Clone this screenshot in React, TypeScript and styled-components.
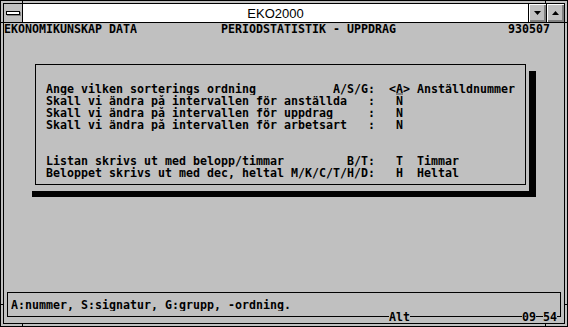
import React from "react";
import styled, { createGlobalStyle } from "styled-components";

const GRAY = "#c0c0c0";
const DARK = "#808080";

// text screen: 80 x 25 cells of 7 x 12 px
const CW = 7;
const CH = 12;

const GlobalStyle = createGlobalStyle`
  html, body {
    margin: 0;
    padding: 0;
    background: ${GRAY};
  }
  body {
    width: 568px;
    height: 327px;
    overflow: hidden;
  }
`;

const Frame = styled.div`
  position: relative;
  box-sizing: border-box;
  width: 568px;
  height: 327px;
  border: 1px solid #000;
  background: ${GRAY};
  padding: 2px;
`;

// the little cuts in a sizing frame
const Notch = styled.div<{ $x?: number; $y?: number; $side: "top" | "bottom" | "left" | "right" }>`
  position: absolute;
  background: #000;
  ${(p) =>
    p.$side === "top" || p.$side === "bottom"
      ? `width: 1px; height: 2px; left: ${p.$x}px; ${p.$side}: 0;`
      : `width: 2px; height: 1px; top: ${p.$y}px; ${p.$side}: 0;`}
`;

const Window = styled.div`
  box-sizing: border-box;
  height: 100%;
  border: 1px solid #000;
  display: flex;
  flex-direction: column;
`;

const TitleBar = styled.div`
  display: flex;
  height: 18px;
  border-bottom: 1px solid #000;
  flex: none;
`;

const SysMenu = styled.div`
  width: 18px;
  border-right: 1px solid #000;
  background: ${GRAY};
  display: flex;
  align-items: center;
  justify-content: center;
`;

const SysBar = styled.div`
  width: 12px;
  height: 2px;
  border: 1px solid #000;
  background: #fff;
  box-shadow: 1px 1px 0 ${DARK};
`;

const Caption = styled.div`
  flex: 1;
  background: #fff;
  display: flex;
  align-items: center;
  justify-content: center;
  font-family: "Liberation Sans", Arial, sans-serif;
  font-size: 13px;
  color: #000;
`;

const CapButton = styled.div`
  width: 18px;
  border-left: 1px solid #000;
  background: ${GRAY};
  box-sizing: border-box;
  box-shadow: inset 1px 1px 0 #fff, inset -2px -2px 0 ${DARK};
  display: flex;
  align-items: center;
  justify-content: center;
  padding: 0 1px 1px 0;
`;

const Screen = styled.div`
  display: grid;
  grid-template-columns: repeat(80, ${CW}px);
  grid-template-rows: repeat(25, ${CH}px);
  height: 300px;
  overflow: hidden;
  background: ${GRAY};
  color: #000;
  font-family: "DejaVu Sans Mono", "Liberation Mono", monospace;
  font-weight: bold;
  font-size: 11.6px;
  line-height: ${CH}px;
`;

type Span = { $row: number; $col: number; $rows?: number; $cols?: number };

const place = (p: Span) => `
  grid-row: ${p.$row + 1} / span ${p.$rows ?? 1};
  grid-column: ${p.$col + 1} / span ${p.$cols ?? 1};
`;

// single-line box drawn through the middle of its edge cells
const Box = styled.div<Span>`
  ${place}
  display: flex;
  flex-direction: column;
`;

const BoxLine = styled.div`
  flex: 1;
  margin: 5px 3px 6px 3px;
  border: 1px solid #000;
`;

const Shadow = styled.div<Span & { $half?: boolean }>`
  ${place}
  background: #000;
  align-self: start;
  height: ${(p) => (p.$half ? CH / 2 : (p.$rows ?? 1) * CH)}px;
`;

const Cursor = styled.div<Span>`
  ${place}
  align-self: end;
  height: 2px;
  background: ${DARK};
`;

const Text = styled.div<Span & { $bg?: boolean }>`
  ${place}
  display: flex;
  white-space: pre;
  overflow: hidden;
  background: ${(p) => (p.$bg ? GRAY : "transparent")};
`;

const Cell = styled.span`
  display: inline-block;
  width: ${CW}px;
  text-align: center;
`;

const Put = ({ row, col, text, bg }: { row: number; col: number; text: string; bg?: boolean }) => (
  <Text $row={row} $col={col} $cols={text.length} $bg={bg}>
    {Array.from(text).map((ch, i) => (
      <Cell key={i}>{ch === " " ? "\u00a0" : ch}</Cell>
    ))}
  </Text>
);

const Arrow = ({ up }: { up?: boolean }) => (
  <svg width="7" height="4" viewBox="0 0 7 4">
    <polygon points={up ? "0,4 7,4 3.5,0" : "0,0 7,0 3.5,4"} fill="#000" />
  </svg>
);

const texts: { row: number; col: number; text: string; bg?: boolean }[] = [
  { row: 0, col: 0, text: "EKONOMIKUNSKAP DATA" },
  { row: 0, col: 31, text: "PERIODSTATISTIK - UPPDRAG" },
  { row: 0, col: 72, text: "930507" },

  { row: 5, col: 6, text: "Ange vilken sorterings ordning" },
  { row: 5, col: 47, text: "A/S/G:" },
  { row: 5, col: 55, text: "<A> Anställdnummer" },
  { row: 6, col: 6, text: "Skall vi ändra på intervallen för anställda" },
  { row: 6, col: 52, text: ":" },
  { row: 6, col: 56, text: "N" },
  { row: 7, col: 6, text: "Skall vi ändra på intervallen för uppdrag" },
  { row: 7, col: 52, text: ":" },
  { row: 7, col: 56, text: "N" },
  { row: 8, col: 6, text: "Skall vi ändra på intervallen för arbetsart" },
  { row: 8, col: 52, text: ":" },
  { row: 8, col: 56, text: "N" },

  { row: 11, col: 6, text: "Listan skrivs ut med belopp/timmar" },
  { row: 11, col: 49, text: "B/T:" },
  { row: 11, col: 56, text: "T" },
  { row: 11, col: 59, text: "Timmar" },
  { row: 12, col: 6, text: "Beloppet skrivs ut med dec, heltal M/K/C/T/H/D:" },
  { row: 12, col: 56, text: "H" },
  { row: 12, col: 59, text: "Heltal" },

  { row: 23, col: 1, text: "A:nummer, S:signatur, G:grupp, -ordning." },
  { row: 24, col: 55, text: "Alt", bg: true },
  { row: 24, col: 74, text: "09", bg: true },
  { row: 24, col: 77, text: "54", bg: true },
];

export default function App() {
  return (
    <>
      <GlobalStyle />
      <Frame>
        <Notch $side="top" $x={21} />
        <Notch $side="top" $x={544} />
        <Notch $side="bottom" $x={21} />
        <Notch $side="bottom" $x={544} />
        <Notch $side="left" $y={21} />
        <Notch $side="left" $y={303} />
        <Notch $side="right" $y={21} />
        <Notch $side="right" $y={303} />
        <Window>
          <TitleBar>
            <SysMenu>
              <SysBar />
            </SysMenu>
            <Caption>EKO2000</Caption>
            <CapButton>
              <Arrow />
            </CapButton>
            <CapButton>
              <Arrow up />
            </CapButton>
          </TitleBar>
          <Screen>
            <Box $row={3} $col={4} $rows={11} $cols={71}>
              <BoxLine />
            </Box>
            <Shadow $row={4} $col={75} $rows={10} />
            <Shadow $row={14} $col={4} $cols={72} $half />
            <Box $row={22} $col={0} $rows={3} $cols={80}>
              <BoxLine />
            </Box>
            {texts.map((t, i) => (
              <Put key={i} {...t} />
            ))}
            <Cursor $row={5} $col={56} />
          </Screen>
        </Window>
      </Frame>
    </>
  );
}
